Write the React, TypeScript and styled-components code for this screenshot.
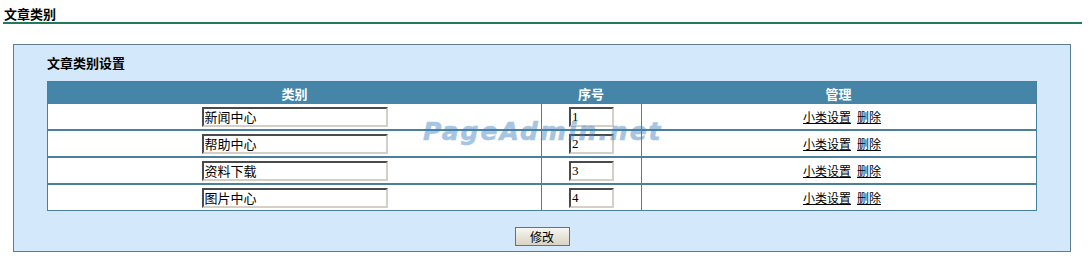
import React from "react";
import styled, { createGlobalStyle } from "styled-components";

const GlobalStyle = createGlobalStyle`
  html, body {
    margin: 0;
    padding: 0;
    background: #ffffff;
    font-family: "Noto Sans CJK SC", "Liberation Sans", sans-serif;
    font-size: 12px;
    color: #000;
  }
`;

const Page = styled.div`
  position: relative;
  width: 1089px;
  height: 264px;
  overflow: hidden;
`;

const PageTitle = styled.div`
  margin: 0 7px 0 3px;
  padding: 6px 0 0 1px;
  height: 16px;
  line-height: 16px;
  font-size: 13px;
  font-weight: bold;
  border-bottom: 2px solid #23795b;
`;

const Panel = styled.div`
  margin: 20px 18px 0 13px;
  background: #d3e8fa;
  border: 1px solid #5f7d8e;
  padding: 0 33px;
`;

const PanelTitle = styled.div`
  height: 36px;
  line-height: 36px;
  font-size: 13px;
  font-weight: bold;
`;

const Table = styled.table`
  width: 990px;
  table-layout: fixed;
  border-collapse: separate;
  border-spacing: 0;
  border: 1px solid #4a809c;
  background: #ffffff;
`;

const HeadCell = styled.th<{ $w?: number }>`
  ${(p) => (p.$w ? `width: ${p.$w}px;` : "")}
  height: 22px;
  padding: 0;
  background: #4585a8;
  color: #ffffff;
  font-size: 13px;
  font-weight: bold;
  text-align: center;
  vertical-align: middle;
`;

const Cell = styled.td<{ $divider?: boolean; $last?: boolean; $shift?: number }>`
  height: 25px;
  padding: 0 0 0 ${(p) => p.$shift ?? 0}px;
  text-align: center;
  vertical-align: middle;
  border-left: ${(p) => (p.$divider ? "1px solid #4a809c" : "none")};
  border-bottom: ${(p) => (p.$last ? "none" : "2px solid #4a809c")};
`;

const TextInput = styled.input<{ $w: number }>`
  box-sizing: border-box;
  width: ${(p) => p.$w}px;
  height: 20px;
  margin: 0;
  padding: 0 1px;
  border-style: solid;
  border-width: 2px;
  border-color: #4a4a4a #d4d0c8 #d4d0c8 #4a4a4a;
  background: #ffffff;
  font-family: "Liberation Serif", "Noto Sans CJK SC", serif;
  font-size: 13px;
  color: #000;
  vertical-align: middle;
  outline: none;
`;

const Actions = styled.div`
  display: inline-flex;
  gap: 6px;
`;

const ActionLink = styled.a`
  color: #000;
  text-decoration: underline;
  font-size: 12px;
  cursor: pointer;
`;

const ButtonBar = styled.div`
  display: flex;
  justify-content: center;
  padding: 16px 0 5px;
`;

const SubmitButton = styled.button`
  box-sizing: border-box;
  width: 55px;
  height: 19px;
  padding: 0;
  border: 1px solid #6f6f6f;
  background: linear-gradient(#f7f6f1, #d9d3c2);
  font-family: "Noto Sans CJK SC", sans-serif;
  font-size: 12px;
  line-height: 17px;
  color: #000;
`;

const Watermark = styled.div`
  position: absolute;
  left: 423px;
  top: 119px;
  font-family: "DejaVu Sans", Verdana, sans-serif;
  font-size: 25px;
  line-height: 25px;
  font-weight: bold;
  font-style: italic;
  letter-spacing: 2px;
  color: #3c7fc0;
  -webkit-text-stroke: 0.6px #3c7fc0;
  opacity: 0.45;
  pointer-events: none;
  white-space: nowrap;
`;

const categories = [
  { name: "新闻中心", order: "1" },
  { name: "帮助中心", order: "2" },
  { name: "资料下载", order: "3" },
  { name: "图片中心", order: "4" },
];

export default function App() {
  return (
    <Page>
      <GlobalStyle />
      <PageTitle>文章类别</PageTitle>
      <Panel>
        <PanelTitle>文章类别设置</PanelTitle>
        <Table>
          <thead>
            <tr>
              <HeadCell $w={493}>类别</HeadCell>
              <HeadCell $w={100}>序号</HeadCell>
              <HeadCell>管理</HeadCell>
            </tr>
          </thead>
          <tbody>
            {categories.map((c, i) => {
              const last = i === categories.length - 1;
              return (
                <tr key={c.order}>
                  <Cell $last={last}>
                    <TextInput $w={186} defaultValue={c.name} />
                  </Cell>
                  <Cell $divider $last={last}>
                    <TextInput $w={45} defaultValue={c.order} />
                  </Cell>
                  <Cell $divider $last={last} $shift={6}>
                    <Actions>
                      <ActionLink>小类设置</ActionLink>
                      <ActionLink>删除</ActionLink>
                    </Actions>
                  </Cell>
                </tr>
              );
            })}
          </tbody>
        </Table>
        <ButtonBar>
          <SubmitButton>修改</SubmitButton>
        </ButtonBar>
      </Panel>
      <Watermark>PageAdmin.net</Watermark>
    </Page>
  );
}
